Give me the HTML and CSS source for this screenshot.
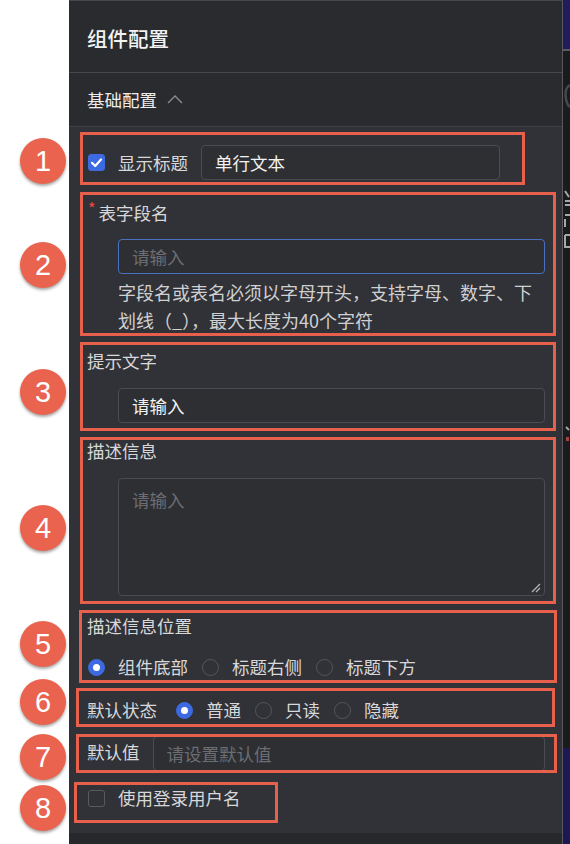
FILE: index.html
```html
<!DOCTYPE html>
<html lang="zh-CN">
<head>
  <meta charset="UTF-8">
  <title>组件配置</title>
  <meta name="viewport" content="width=device-width, initial-scale=1">
  <link rel="stylesheet" href="styles.css">
</head>
<body>
<div class="page">
  <div class="gutter"></div>

  <section class="panel">
    <header class="panel-head">组件配置</header>
    <div class="group-head">
      基础配置
      <svg class="chevron" width="16" height="10" viewBox="0 0 16 10"><polyline points="1,9 8,2 15,9" fill="none" stroke="#8b8c90" stroke-width="1.4"/></svg>
    </div>

    <div class="form">
      <div class="row row-title">
        <span class="check on"><svg width="17" height="17" viewBox="0 0 17 17"><polyline points="4,8.8 7.2,12 13,5.5" fill="none" stroke="#fff" stroke-width="2.2" stroke-linecap="round" stroke-linejoin="round"/></svg></span>
        <span class="opt-text">显示标题</span>
        <input class="field title-field" value="单行文本">
      </div>

      <div class="item item-name">
        <div class="label"><span class="star">*</span>表字段名</div>
        <div class="indent">
          <input class="field focus" placeholder="请输入">
          <p class="help">字段名或表名必须以字母开头，支持字母、数字、下划线（_），最大长度为40个字符</p>
        </div>
      </div>

      <div class="item item-hint">
        <div class="label">提示文字</div>
        <div class="indent">
          <input class="field" value="请输入">
        </div>
      </div>

      <div class="item item-desc">
        <div class="label">描述信息</div>
        <div class="indent">
          <div class="area-wrap">
            <textarea class="field area" placeholder="请输入"></textarea>
            <svg class="grip" width="10" height="10" viewBox="0 0 10 10"><path d="M9 1L1 9M9 5L5 9" stroke="#b4b4b8" stroke-width="1.3"/></svg>
          </div>
        </div>
      </div>

      <div class="item item-pos">
        <div class="label">描述信息位置</div>
        <div class="radios">
          <span class="radio on"></span><span class="opt-text">组件底部</span>
          <span class="radio"></span><span class="opt-text">标题右侧</span>
          <span class="radio"></span><span class="opt-text">标题下方</span>
        </div>
      </div>

      <div class="row row-state">
        <span class="label">默认状态</span>
        <div class="radios">
          <span class="radio on"></span><span class="opt-text">普通</span>
          <span class="radio"></span><span class="opt-text">只读</span>
          <span class="radio"></span><span class="opt-text">隐藏</span>
        </div>
      </div>

      <div class="row row-default">
        <span class="label">默认值</span>
        <input class="field" placeholder="请设置默认值">
      </div>

      <div class="row row-user">
        <span class="check"></span>
        <span class="opt-text">使用登录用户名</span>
      </div>
    </div>

    <div class="panel-foot"></div>
  </section>

  <div class="edge">
    <div class="edge-top"></div>
    <div class="edge-mid">
      <svg width="7" height="400" viewBox="0 0 7 400">
        <path d="M7 34C3 36 2 42 3 48C4 54 7 56 7 56" fill="none" stroke="#48484c" stroke-width="2.5"/>
        <path d="M2 140L6 146M2 150H7M2 154H7M2 164H7M2 168L2 176" fill="none" stroke="#a7a7ab" stroke-width="2"/>
        <path d="M2 184H7M2 184V196H7" fill="none" stroke="#a7a7ab" stroke-width="2"/>
        <path d="M3 376L6 379" stroke="#a7a7ab" stroke-width="2"/>
        <rect x="3" y="386" width="3" height="4" fill="#a14444"/>
      </svg>
    </div>
    <div class="edge-bottom"></div>
  </div>
</div>

<!-- annotation layer -->
<div class="notes">
  <div class="mark mark-1"></div>
  <div class="mark mark-2"></div>
  <div class="mark mark-3"></div>
  <div class="mark mark-4"></div>
  <div class="mark mark-5"></div>
  <div class="mark mark-6"></div>
  <div class="mark mark-7"></div>
  <div class="mark mark-8"></div>
  <div class="pin pin-1">1</div>
  <div class="pin pin-2">2</div>
  <div class="pin pin-3">3</div>
  <div class="pin pin-4">4</div>
  <div class="pin pin-5">5</div>
  <div class="pin pin-6">6</div>
  <div class="pin pin-7">7</div>
  <div class="pin pin-8">8</div>
</div>
</body>
</html>
```

FILE: styles.css
```css
*{box-sizing:border-box;}
body{margin:0;background:#fff;font-family:"Noto Sans CJK SC","Noto Sans",sans-serif;position:relative;}
.page{display:flex;height:844px;overflow:hidden;}
.gutter{width:69px;flex:none;background:#fff;}

.panel{width:494px;flex:none;background:#313237;border-top:1px solid #47484d;border-right:1px solid #58595e;display:flex;flex-direction:column;}
.panel-head{height:72px;padding:3px 0 0 18px;display:flex;align-items:center;font-size:20.5px;font-weight:500;color:#f2f2f2;background:#2a2b2f;border-bottom:1px solid #46474c;}
.group-head{height:54px;padding-left:18px;display:flex;align-items:center;gap:10px;font-size:17.5px;color:#ededed;background:#2a2b2f;border-bottom:1px solid #3f4045;}
.chevron{margin-top:-2px;}

.form{flex:1;padding:18px 17px 0 18px;font-size:17.5px;color:#d8d8da;}
.row{display:flex;align-items:center;}
.label{height:24px;line-height:24px;color:#d8d8da;white-space:nowrap;}
.star{color:#f0473c;font-size:16px;line-height:0;vertical-align:5px;margin:0 3px 0 1px;}
.indent{padding-left:31px;}
.opt-text{line-height:24px;white-space:nowrap;}

.field{display:block;width:100%;height:35px;background:#2e2f33;border:1px solid #4b4c51;border-radius:4px;padding:0 13px;font:inherit;color:#f3f3f3;outline:none;}
.field::placeholder{color:#6c6d72;}
.field.focus{border-color:#4a70c2;}

.check{width:17px;height:17px;flex:none;border-radius:3px;border:1px solid #595a5f;margin-left:1px;}
.check.on{background:#3e6ae1;border-color:#3e6ae1;}
.check svg{display:block;margin:-1px;}

.row-title .opt-text{margin-left:13px;}
.title-field{width:299px;margin-left:13px;}

.item-name{margin-top:21px;}
.item-name .field{margin-top:14px;}
.help{margin:4px 0 0;font-size:18px;line-height:28px;color:#d0d0d2;}

.item-hint{margin-top:15px;}
.item-hint .field{margin-top:15px;}

.item-desc{margin-top:16px;}
.area-wrap{margin-top:15px;position:relative;}
.area{height:118px;padding:8px 13px;resize:none;}
.grip{position:absolute;right:4px;bottom:3px;}

.item-pos{margin-top:18px;}
.radios{display:flex;align-items:center;}
.item-pos .radios{margin-top:17px;margin-left:1px;}
.radio{width:17px;height:17px;flex:none;border-radius:50%;border:1px solid #55565b;margin:0 13px 0 14px;}
.radios .radio:first-child{margin-left:0;}
.radio.on{background:#3e6ae1;border-color:#3e6ae1;display:flex;align-items:center;justify-content:center;}
.radio.on::after{content:"";width:7px;height:7px;border-radius:50%;background:#fff;}

.row-state{margin-top:19px;}
.row-state .radios{margin-left:19px;}

.row-default{margin-top:14px;}
.row-default .label{margin-top:-3px;}
.row-default .field{flex:1;margin-left:13px;}

.row-user{margin-top:15px;}
.row-user .opt-text{margin-left:13px;}

.panel-foot{height:11px;background:#27282c;}

.edge{width:7px;flex:none;background:#1b1b1e;display:flex;flex-direction:column;overflow:hidden;}
.edge-top{height:51px;background:#221c5e;border-bottom:2px solid #5a5a60;}
.edge-mid{flex:1;}
.edge-mid svg{display:block;}
.edge-bottom{height:96px;background:#1e1852;}

/* annotations drawn on top of the screenshot */
.notes{position:absolute;left:0;top:0;width:570px;height:844px;pointer-events:none;}
.mark{position:absolute;border:3px solid #e6604c;}
.mark-1{left:80px;top:132px;width:445px;height:53px;}
.mark-2{left:80px;top:192px;width:476px;height:144px;}
.mark-3{left:80px;top:342px;width:476px;height:89px;}
.mark-4{left:80px;top:437px;width:476px;height:167px;}
.mark-5{left:79px;top:610px;width:478px;height:73px;}
.mark-6{left:76px;top:688px;width:479px;height:39px;}
.mark-7{left:76px;top:734px;width:481px;height:39px;}
.mark-8{left:74px;top:782px;width:204px;height:41px;}
.pin{position:absolute;left:20px;width:46px;height:46px;border-radius:50%;background:#e9634e;color:#fff;font:29px/46px "Liberation Sans",sans-serif;text-align:center;box-shadow:0 2px 3px rgba(0,0,0,.35);}
.pin-1{top:138px;}
.pin-2{top:242px;}
.pin-3{top:369px;}
.pin-4{top:505px;}
.pin-5{top:621px;}
.pin-6{top:679px;}
.pin-7{top:734px;}
.pin-8{top:785px;}
```
